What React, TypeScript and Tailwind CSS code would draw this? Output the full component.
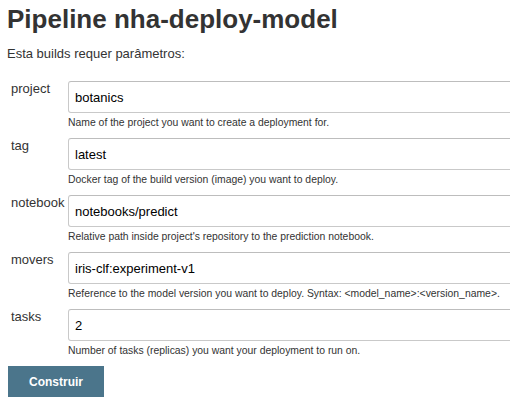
import React from 'react';

interface Param {
  name: string;
  value: string;
  description: string;
}

const params: Param[] = [
  {
    name: 'project',
    value: 'botanics',
    description: 'Name of the project you want to create a deployment for.',
  },
  {
    name: 'tag',
    value: 'latest',
    description: 'Docker tag of the build version (image) you want to deploy.',
  },
  {
    name: 'notebook',
    value: 'notebooks/predict',
    description: "Relative path inside project's repository to the prediction notebook.",
  },
  {
    name: 'movers',
    value: 'iris-clf:experiment-v1',
    description:
      'Reference to the model version you want to deploy. Syntax: <model_name>:<version_name>.',
  },
  {
    name: 'tasks',
    value: '2',
    description: 'Number of tasks (replicas) you want your deployment to run on.',
  },
];

function ParamRow({ param }: { param: Param }) {
  return (
    <div className="flex">
      <div className="w-[68px] shrink-0 pl-[11px] text-[13px] leading-[16px] text-[#333]">
        {param.name}
      </div>
      <div className="flex flex-col">
        <input
          type="text"
          readOnly
          defaultValue={param.value}
          className="h-[32px] w-[460px] rounded-[3px] border border-[#c9c9c9] border-t-[#bdbdbd] bg-white pl-[6px] text-[13px] text-black outline-none"
        />
        <div className="mt-[3px] text-[10.4px] leading-[13px] text-[#333]">
          {param.description}
        </div>
      </div>
    </div>
  );
}

export default function App() {
  return (
    <div className="h-[409px] w-[510px] overflow-hidden bg-white font-['Liberation_Sans',Arial,sans-serif] text-[#333]">
      {/* Header */}
      <h1 className="pl-[7px] pt-[4px] text-[26px] font-bold leading-[30px] text-[#333]">
        Pipeline nha-deploy-model
      </h1>
      <p className="mt-[12px] pl-[7px] text-[13px] leading-[16px]">
        Esta builds requer parâmetros:
      </p>

      {/* Parameters */}
      <div className="mt-[19px] flex flex-col gap-[9px]">
        {params.map((p) => (
          <ParamRow key={p.name} param={p} />
        ))}
      </div>

      {/* Actions */}
      <button
        type="button"
        className="ml-[8px] mt-[9px] flex h-[31px] w-[96px] items-center justify-center bg-[#4b758b] text-[12px] font-bold text-white"
      >
        Construir
      </button>
    </div>
  );
}
